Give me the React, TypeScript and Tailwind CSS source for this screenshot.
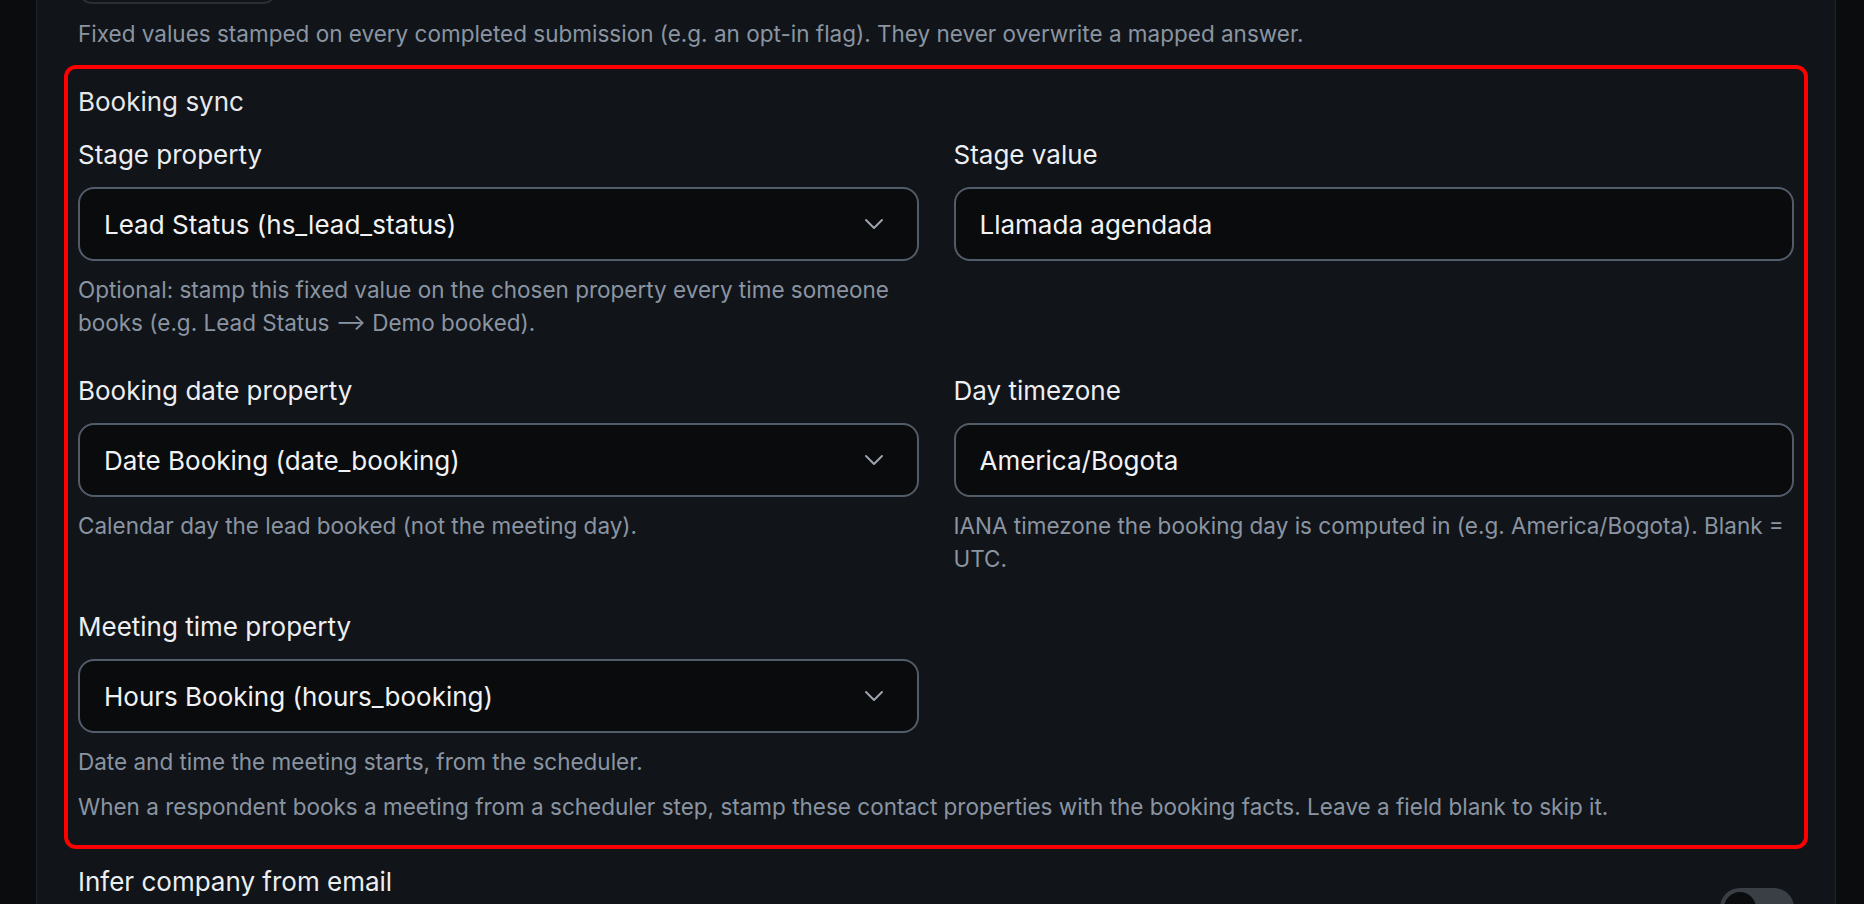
import { ChevronDown } from "lucide-react";
import type { ReactNode } from "react";

const SelectBox = ({ value }: { value: string }) => (
  <button
    type="button"
    className="flex h-[74px] w-full items-center justify-between rounded-[16px] border-2 border-[#525c68] bg-[#0a0b0d] pl-[24px] pr-[27px] text-left text-[26px] text-[#f1f2f4]"
  >
    <span>{value}</span>
    <ChevronDown size={32} strokeWidth={1.5} className="text-[#9aa3ae]" />
  </button>
);

const TextBox = ({ value }: { value: string }) => (
  <input
    type="text"
    defaultValue={value}
    className="h-[74px] w-full rounded-[16px] border-2 border-[#525c68] bg-[#0a0b0d] px-[24px] text-[26px] text-[#f1f2f4] outline-none"
  />
);

const Field = ({ label, help, children }: { label: string; help?: string; children: ReactNode }) => (
  <div className="flex flex-col">
    <label className="text-[26px] leading-[32px] text-[#eceef1]">{label}</label>
    <div className="mt-[16px]">{children}</div>
    {help && <p className="mt-[12px] text-[22.5px] leading-[33px] text-[#8a94a2]">{help}</p>}
  </div>
);

export default function App() {
  return (
    <div className="flex h-[904px] overflow-hidden bg-[#0b0c0e] font-['Inter','Noto_Sans',sans-serif]">
      <main className="ml-[36px] mr-[28px] flex-1 border-x border-[#22262c] bg-[#111418] px-[41px]">
        {/* bottom of the previous section's button */}
        <div className="-mt-[51px] h-[55px] w-[199px] rounded-[14px] border-2 border-[#2a2f36]" />

        <p className="mt-[14px] text-[22.5px] leading-[32px] text-[#8a94a2]">
          Fixed values stamped on every completed submission (e.g. an opt-in flag). They never overwrite a mapped answer.
        </p>

        <section className="-mx-[14px] mt-[15px] rounded-[12px] border-4 border-[#ff0000] px-[10px] pb-[22px] pt-[17px]">
          <h3 className="text-[26px] leading-[32px] text-[#e6e8eb]">Booking sync</h3>

          <div className="mt-[21px] grid grid-cols-2 gap-x-[35px] gap-y-[36px]">
            <Field
              label="Stage property"
              help="Optional: stamp this fixed value on the chosen property every time someone books (e.g. Lead Status ⟶ Demo booked)."
            >
              <SelectBox value="Lead Status (hs_lead_status)" />
            </Field>
            <Field label="Stage value">
              <TextBox value="Llamada agendada" />
            </Field>

            <Field label="Booking date property" help="Calendar day the lead booked (not the meeting day).">
              <SelectBox value="Date Booking (date_booking)" />
            </Field>
            <Field
              label="Day timezone"
              help="IANA timezone the booking day is computed in (e.g. America/Bogota). Blank = UTC."
            >
              <TextBox value="America/Bogota" />
            </Field>

            <Field label="Meeting time property" help="Date and time the meeting starts, from the scheduler.">
              <SelectBox value="Hours Booking (hours_booking)" />
            </Field>
          </div>

          <p className="mt-[12px] text-[22.5px] leading-[33px] text-[#8a94a2]">
            When a respondent books a meeting from a scheduler step, stamp these contact properties with the booking facts. Leave a field blank to skip it.
          </p>
        </section>

        <div className="mt-[17px] flex items-start justify-between">
          <span className="text-[26px] leading-[32px] text-[#eceef1]">Infer company from email</span>
          <div className="mt-[22px] flex h-[40px] w-[74px] items-center rounded-full bg-[#3a3f46] px-[4px]">
            <div className="h-[32px] w-[32px] rounded-full bg-[#0b0c0e]" />
          </div>
        </div>
      </main>
    </div>
  );
}
